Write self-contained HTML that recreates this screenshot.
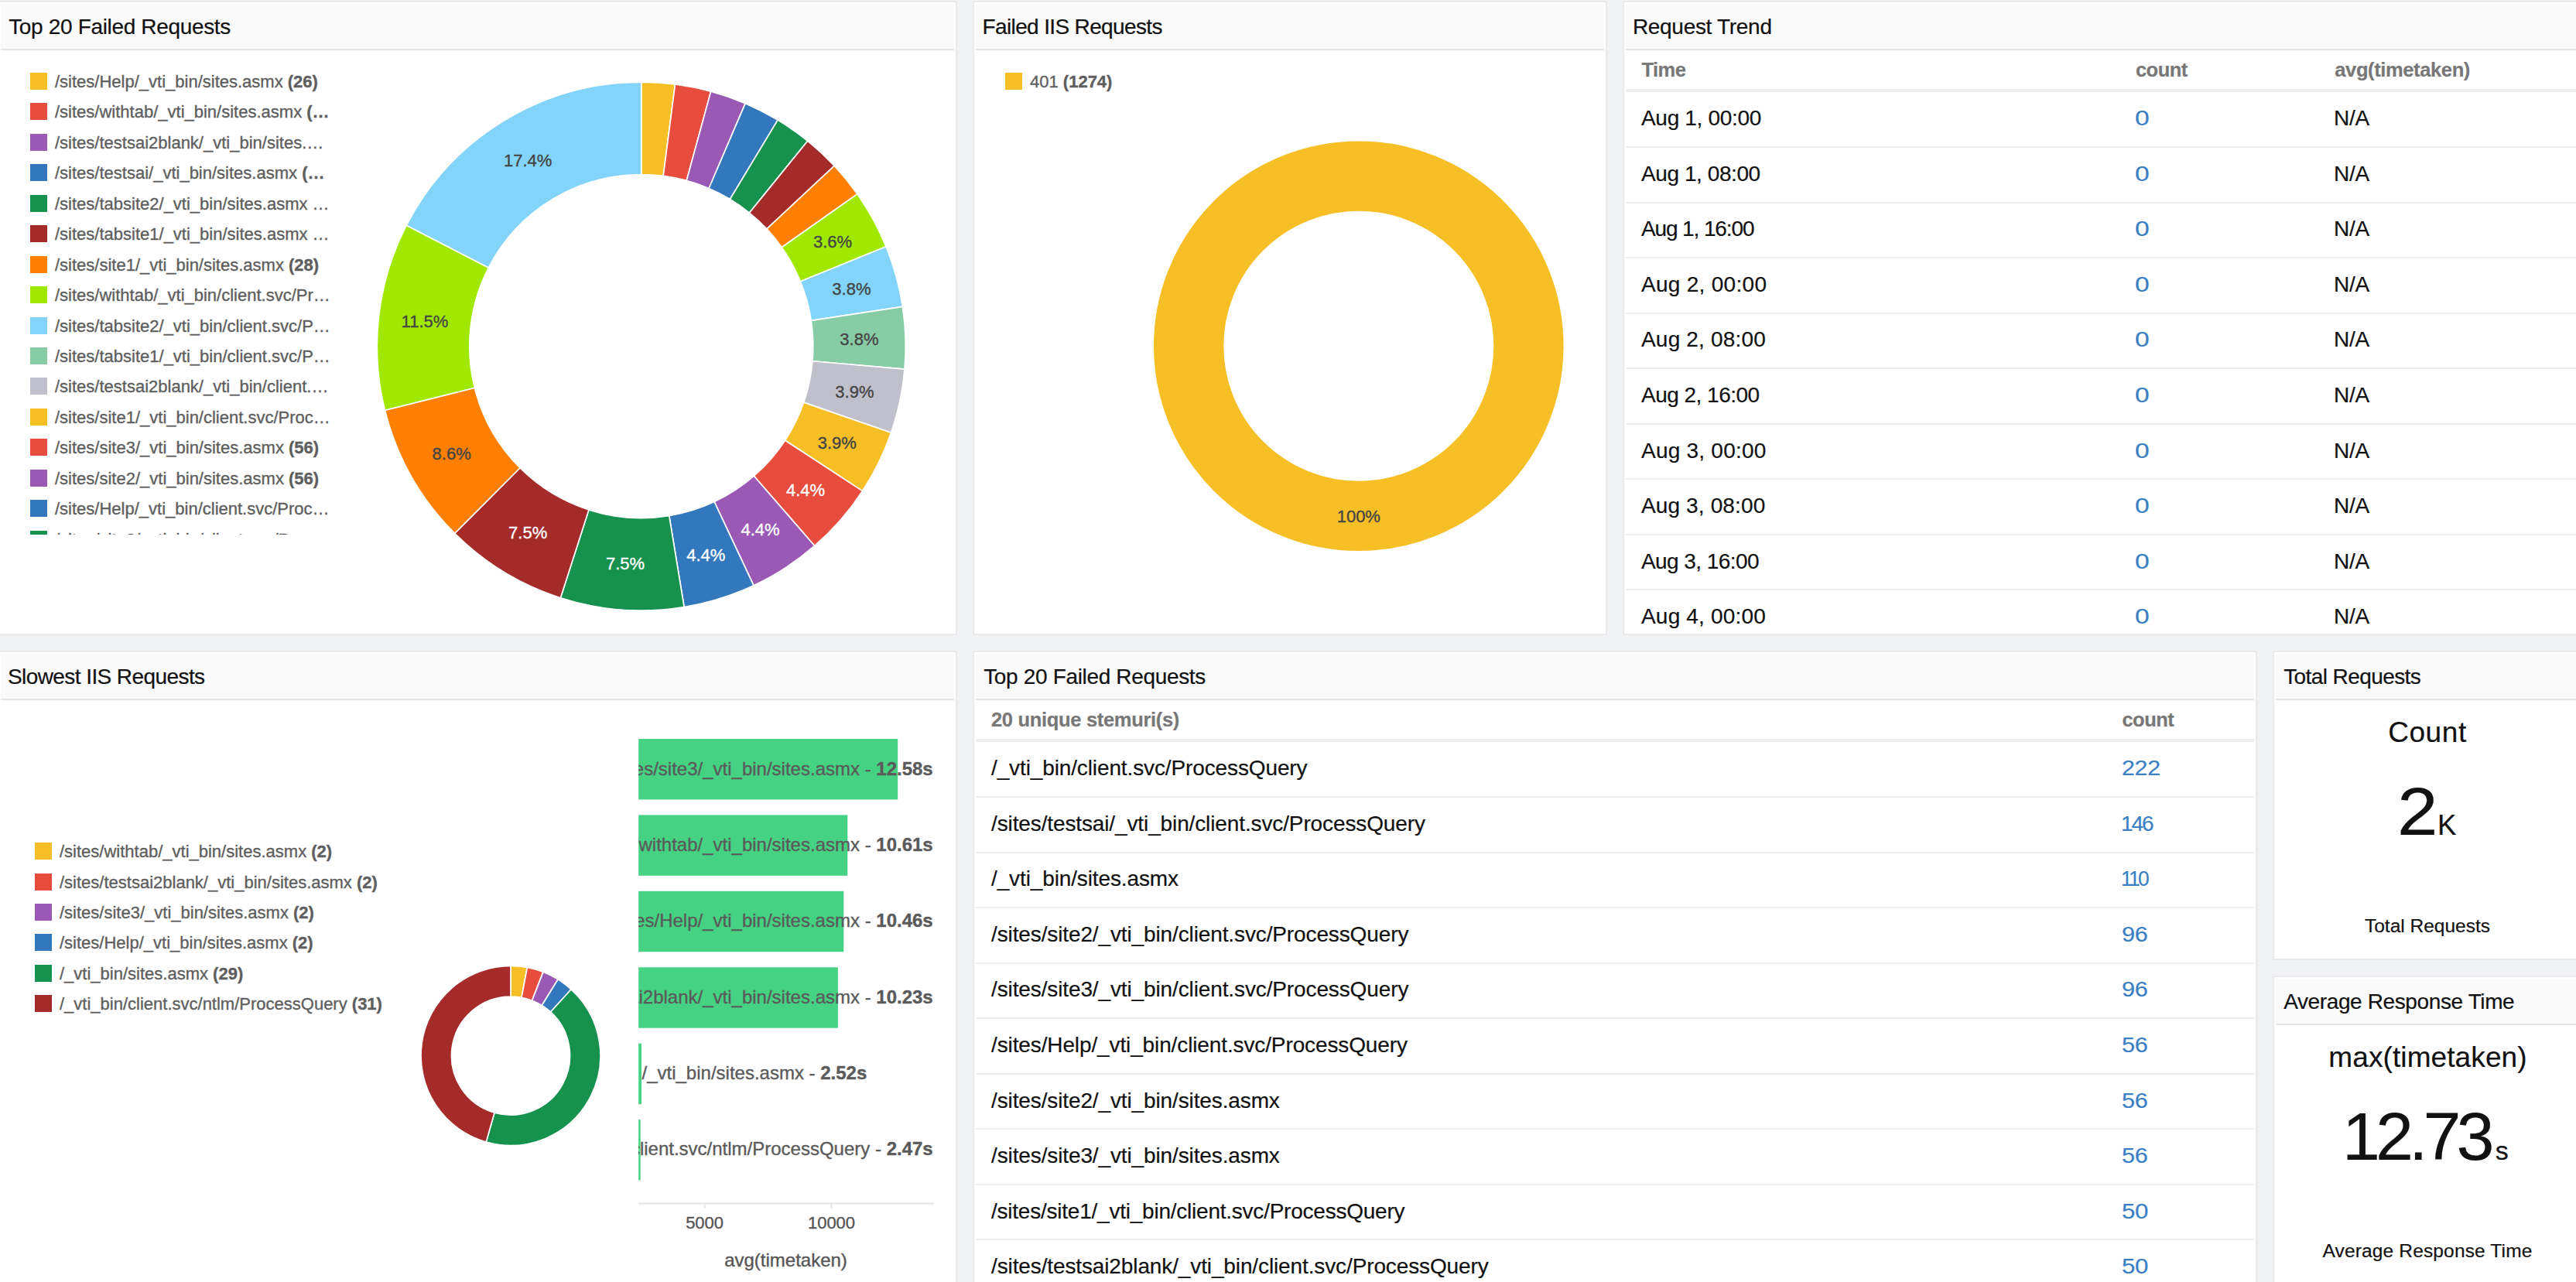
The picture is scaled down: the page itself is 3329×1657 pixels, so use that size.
<!DOCTYPE html>
<html><head><meta charset="utf-8"><title>IIS Dashboard</title>
<style>
html,body{margin:0;padding:0}
body{width:3329px;height:1657px;background:#f1f2f4;overflow:hidden;font-family:"Liberation Sans",sans-serif}
#page{position:relative;width:3329px;height:1657px;overflow:hidden;background:#f1f2f4}
.t{position:absolute;white-space:pre;line-height:1;-webkit-text-stroke:0.2px}
.c{-webkit-text-stroke:0.35px}
.panel{position:absolute;background:#fff;border:2px solid #e9e9eb;overflow:hidden}
.hdr{position:absolute;left:2px;top:2px;height:58px;background:#fafafa;border-bottom:2px solid #e4e4e4}
.sw{position:absolute;width:22px;height:22px}
.ln{position:absolute;height:2px;background:#ededed}
.thl{position:absolute;height:4px;background:#eeeeee}
.clip{position:absolute;overflow:hidden}
svg{position:absolute;left:0;top:0}
b{font-weight:700}
</style></head><body><div id="page">
<div class="panel" style="left:-3px;top:1px;width:1236px;height:816px">
<div class="hdr" style="width:1232px"></div>
</div>
<div class="t " style="top:21px;font-size:28px;color:#111;letter-spacing:-0.34px;left:11.20px;">Top 20 Failed Requests</div>
<div class="panel" style="left:1257px;top:1px;width:816px;height:816px">
<div class="hdr" style="width:812px"></div>
</div>
<div class="t " style="top:21px;font-size:28px;color:#111;letter-spacing:-0.64px;left:1269.60px;">Failed IIS Requests</div>
<div class="panel" style="left:2097px;top:1px;width:1236px;height:816px">
<div class="hdr" style="width:1232px"></div>
</div>
<div class="t " style="top:21px;font-size:28px;color:#111;letter-spacing:-0.3px;left:2109.90px;">Request Trend</div>
<div class="panel" style="left:-3px;top:841px;width:1236px;height:896px">
<div class="hdr" style="width:1232px"></div>
</div>
<div class="t " style="top:861px;font-size:28px;color:#111;letter-spacing:-0.58px;left:10.00px;">Slowest IIS Requests</div>
<div class="panel" style="left:1257px;top:841px;width:1656px;height:896px">
<div class="hdr" style="width:1652px"></div>
</div>
<div class="t " style="top:861px;font-size:28px;color:#111;letter-spacing:-0.34px;left:1271.20px;">Top 20 Failed Requests</div>
<div class="panel" style="left:2937px;top:841px;width:397px;height:396px">
<div class="hdr" style="width:393px"></div>
</div>
<div class="t " style="top:861px;font-size:28px;color:#111;letter-spacing:-0.59px;left:2951.20px;">Total Requests</div>
<div class="panel" style="left:2937px;top:1261px;width:397px;height:496px">
<div class="hdr" style="width:393px"></div>
</div>
<div class="t " style="top:1281px;font-size:28px;color:#111;letter-spacing:-0.38px;left:2951.20px;">Average Response Time</div>
<div class="clip" style="left:0;top:66px;width:480px;height:625px">
<div class="sw" style="left:39px;top:28.0px;background:#F6BF26"></div>
<div class="t c" style="top:29px;font-size:22px;color:#5e5e5e;left:71.00px;">/sites/Help/_vti_bin/sites.asmx <b>(26)</b></div>
<div class="sw" style="left:39px;top:67.0px;background:#E74C3C"></div>
<div class="t c" style="top:68px;font-size:22px;color:#5e5e5e;left:71.00px;">/sites/withtab/_vti_bin/sites.asmx <b>(…</b></div>
<div class="sw" style="left:39px;top:107.0px;background:#9B59B6"></div>
<div class="t c" style="top:108px;font-size:22px;color:#5e5e5e;left:71.00px;">/sites/testsai2blank/_vti_bin/sites.…</div>
<div class="sw" style="left:39px;top:146.0px;background:#3377BC"></div>
<div class="t c" style="top:147px;font-size:22px;color:#5e5e5e;left:71.00px;">/sites/testsai/_vti_bin/sites.asmx <b>(…</b></div>
<div class="sw" style="left:39px;top:186.0px;background:#16914E"></div>
<div class="t c" style="top:187px;font-size:22px;color:#5e5e5e;left:71.00px;">/sites/tabsite2/_vti_bin/sites.asmx …</div>
<div class="sw" style="left:39px;top:225.0px;background:#A52A2A"></div>
<div class="t c" style="top:226px;font-size:22px;color:#5e5e5e;left:71.00px;">/sites/tabsite1/_vti_bin/sites.asmx …</div>
<div class="sw" style="left:39px;top:265.0px;background:#FF7F00"></div>
<div class="t c" style="top:266px;font-size:22px;color:#5e5e5e;left:71.00px;">/sites/site1/_vti_bin/sites.asmx <b>(28)</b></div>
<div class="sw" style="left:39px;top:304.0px;background:#A0E800"></div>
<div class="t c" style="top:305px;font-size:22px;color:#5e5e5e;left:71.00px;">/sites/withtab/_vti_bin/client.svc/Pr…</div>
<div class="sw" style="left:39px;top:344.0px;background:#82D4FA"></div>
<div class="t c" style="top:345px;font-size:22px;color:#5e5e5e;left:71.00px;">/sites/tabsite2/_vti_bin/client.svc/P…</div>
<div class="sw" style="left:39px;top:383.0px;background:#88CCA5"></div>
<div class="t c" style="top:384px;font-size:22px;color:#5e5e5e;left:71.00px;">/sites/tabsite1/_vti_bin/client.svc/P…</div>
<div class="sw" style="left:39px;top:422.0px;background:#C0C0CC"></div>
<div class="t c" style="top:423px;font-size:22px;color:#5e5e5e;left:71.00px;">/sites/testsai2blank/_vti_bin/client.…</div>
<div class="sw" style="left:39px;top:462.0px;background:#F6BF26"></div>
<div class="t c" style="top:463px;font-size:22px;color:#5e5e5e;left:71.00px;">/sites/site1/_vti_bin/client.svc/Proc…</div>
<div class="sw" style="left:39px;top:501.0px;background:#E74C3C"></div>
<div class="t c" style="top:502px;font-size:22px;color:#5e5e5e;left:71.00px;">/sites/site3/_vti_bin/sites.asmx <b>(56)</b></div>
<div class="sw" style="left:39px;top:541.0px;background:#9B59B6"></div>
<div class="t c" style="top:542px;font-size:22px;color:#5e5e5e;left:71.00px;">/sites/site2/_vti_bin/sites.asmx <b>(56)</b></div>
<div class="sw" style="left:39px;top:580.0px;background:#3377BC"></div>
<div class="t c" style="top:581px;font-size:22px;color:#5e5e5e;left:71.00px;">/sites/Help/_vti_bin/client.svc/Proc…</div>
<div class="sw" style="left:39px;top:620.0px;background:#16914E"></div>
<div class="t c" style="top:621px;font-size:22px;color:#5e5e5e;left:71.00px;">/sites/site3/_vti_bin/client.svc/Pro…</div>
</div>
<div class="sw" style="left:1299px;top:94px;background:#F6BF26"></div>
<div class="t c" style="top:95px;font-size:22px;color:#5e5e5e;left:1331.00px;">401 <b>(1274)</b></div>
<div class="sw" style="left:45px;top:1089.0px;background:#F6BF26"></div>
<div class="t c" style="top:1090px;font-size:22px;color:#5e5e5e;left:77.00px;">/sites/withtab/_vti_bin/sites.asmx <b>(2)</b></div>
<div class="sw" style="left:45px;top:1129.0px;background:#E74C3C"></div>
<div class="t c" style="top:1130px;font-size:22px;color:#5e5e5e;left:77.00px;">/sites/testsai2blank/_vti_bin/sites.asmx <b>(2)</b></div>
<div class="sw" style="left:45px;top:1168.0px;background:#9B59B6"></div>
<div class="t c" style="top:1169px;font-size:22px;color:#5e5e5e;left:77.00px;">/sites/site3/_vti_bin/sites.asmx <b>(2)</b></div>
<div class="sw" style="left:45px;top:1207.0px;background:#3377BC"></div>
<div class="t c" style="top:1208px;font-size:22px;color:#5e5e5e;left:77.00px;">/sites/Help/_vti_bin/sites.asmx <b>(2)</b></div>
<div class="sw" style="left:45px;top:1247.0px;background:#16914E"></div>
<div class="t c" style="top:1248px;font-size:22px;color:#5e5e5e;left:77.00px;">/_vti_bin/sites.asmx <b>(29)</b></div>
<div class="sw" style="left:45px;top:1286.0px;background:#A52A2A"></div>
<div class="t c" style="top:1287px;font-size:22px;color:#5e5e5e;left:77.00px;">/_vti_bin/client.svc/ntlm/ProcessQuery <b>(31)</b></div>
<svg width="3329" height="1657" viewBox="0 0 3329 1657">
<path d="M828.80 106.10A341.5 341.5 0 0 1 872.47 108.90L857.19 227.42A222.0 222.0 0 0 0 828.80 225.60Z" fill="#F6BF26" stroke="#fff" stroke-width="1.7" stroke-linejoin="round"/><path d="M872.47 108.90A341.5 341.5 0 0 1 918.68 118.14L887.23 233.43A222.0 222.0 0 0 0 857.19 227.42Z" fill="#E74C3C" stroke="#fff" stroke-width="1.7" stroke-linejoin="round"/><path d="M918.68 118.14A341.5 341.5 0 0 1 963.17 133.65L916.15 243.51A222.0 222.0 0 0 0 887.23 233.43Z" fill="#9B59B6" stroke="#fff" stroke-width="1.7" stroke-linejoin="round"/><path d="M963.17 133.65A341.5 341.5 0 0 1 1005.11 155.13L943.41 257.48A222.0 222.0 0 0 0 916.15 243.51Z" fill="#3377BC" stroke="#fff" stroke-width="1.7" stroke-linejoin="round"/><path d="M1005.11 155.13A341.5 341.5 0 0 1 1043.69 182.19L968.49 275.06A222.0 222.0 0 0 0 943.41 257.48Z" fill="#16914E" stroke="#fff" stroke-width="1.7" stroke-linejoin="round"/><path d="M1043.69 182.19A341.5 341.5 0 0 1 1078.18 214.29L990.92 295.93A222.0 222.0 0 0 0 968.49 275.06Z" fill="#A52A2A" stroke="#fff" stroke-width="1.7" stroke-linejoin="round"/><path d="M1078.18 214.29A341.5 341.5 0 0 1 1107.92 250.84L1010.25 319.69A222.0 222.0 0 0 0 990.92 295.93Z" fill="#FF7F00" stroke="#fff" stroke-width="1.7" stroke-linejoin="round"/><path d="M1107.92 250.84A341.5 341.5 0 0 1 1145.03 318.67L1034.37 363.78A222.0 222.0 0 0 0 1010.25 319.69Z" fill="#A0E800" stroke="#fff" stroke-width="1.7" stroke-linejoin="round"/><path d="M1145.03 318.67A341.5 341.5 0 0 1 1166.44 396.42L1048.29 414.33A222.0 222.0 0 0 0 1034.37 363.78Z" fill="#82D4FA" stroke="#fff" stroke-width="1.7" stroke-linejoin="round"/><path d="M1166.44 396.42A341.5 341.5 0 0 1 1169.03 477.04L1049.97 466.74A222.0 222.0 0 0 0 1048.29 414.33Z" fill="#88CCA5" stroke="#fff" stroke-width="1.7" stroke-linejoin="round"/><path d="M1169.03 477.04A341.5 341.5 0 0 1 1151.55 559.20L1038.61 520.15A222.0 222.0 0 0 0 1049.97 466.74Z" fill="#C0C0CC" stroke="#fff" stroke-width="1.7" stroke-linejoin="round"/><path d="M1151.55 559.20A341.5 341.5 0 0 1 1114.55 634.61L1014.56 569.17A222.0 222.0 0 0 0 1038.61 520.15Z" fill="#F6BF26" stroke="#fff" stroke-width="1.7" stroke-linejoin="round"/><path d="M1114.55 634.61A341.5 341.5 0 0 1 1052.72 705.44L974.37 615.21A222.0 222.0 0 0 0 1014.56 569.17Z" fill="#E74C3C" stroke="#fff" stroke-width="1.7" stroke-linejoin="round"/><path d="M1052.72 705.44A341.5 341.5 0 0 1 973.93 756.73L923.14 648.56A222.0 222.0 0 0 0 974.37 615.21Z" fill="#9B59B6" stroke="#fff" stroke-width="1.7" stroke-linejoin="round"/><path d="M973.93 756.73A341.5 341.5 0 0 1 884.13 784.59L864.77 666.67A222.0 222.0 0 0 0 923.14 648.56Z" fill="#3377BC" stroke="#fff" stroke-width="1.7" stroke-linejoin="round"/><path d="M884.13 784.59A341.5 341.5 0 0 1 724.39 772.75L760.93 658.97A222.0 222.0 0 0 0 864.77 666.67Z" fill="#16914E" stroke="#fff" stroke-width="1.7" stroke-linejoin="round"/><path d="M724.39 772.75A341.5 341.5 0 0 1 587.62 689.37L672.02 604.77A222.0 222.0 0 0 0 760.93 658.97Z" fill="#A52A2A" stroke="#fff" stroke-width="1.7" stroke-linejoin="round"/><path d="M587.62 689.37A341.5 341.5 0 0 1 497.43 530.14L613.38 501.26A222.0 222.0 0 0 0 672.02 604.77Z" fill="#FF7F00" stroke="#fff" stroke-width="1.7" stroke-linejoin="round"/><path d="M497.43 530.14A341.5 341.5 0 0 1 525.25 291.14L631.47 345.89A222.0 222.0 0 0 0 613.38 501.26Z" fill="#A0E800" stroke="#fff" stroke-width="1.7" stroke-linejoin="round"/><path d="M525.25 291.14A341.5 341.5 0 0 1 828.80 106.10L828.80 225.60A222.0 222.0 0 0 0 631.47 345.89Z" fill="#82D4FA" stroke="#fff" stroke-width="1.7" stroke-linejoin="round"/>
<circle cx="1755.8" cy="447.2" r="219.65" fill="none" stroke="#F6BF26" stroke-width="90.30000000000001"/>
<path d="M660.00 1248.50A116.0 116.0 0 0 1 681.31 1250.48L674.06 1289.30A76.5 76.5 0 0 0 660.00 1288.00Z" fill="#F6BF26" stroke="#fff" stroke-width="1.7" stroke-linejoin="round"/><path d="M681.31 1250.48A116.0 116.0 0 0 1 701.90 1256.33L687.63 1293.17A76.5 76.5 0 0 0 674.06 1289.30Z" fill="#E74C3C" stroke="#fff" stroke-width="1.7" stroke-linejoin="round"/><path d="M701.90 1256.33A116.0 116.0 0 0 1 721.07 1265.87L700.27 1299.46A76.5 76.5 0 0 0 687.63 1293.17Z" fill="#9B59B6" stroke="#fff" stroke-width="1.7" stroke-linejoin="round"/><path d="M721.07 1265.87A116.0 116.0 0 0 1 738.15 1278.77L711.54 1307.97A76.5 76.5 0 0 0 700.27 1299.46Z" fill="#3377BC" stroke="#fff" stroke-width="1.7" stroke-linejoin="round"/><path d="M738.15 1278.77A116.0 116.0 0 0 1 628.26 1476.07L639.06 1438.08A76.5 76.5 0 0 0 711.54 1307.97Z" fill="#16914E" stroke="#fff" stroke-width="1.7" stroke-linejoin="round"/><path d="M628.26 1476.07A116.0 116.0 0 0 1 660.00 1248.50L660.00 1288.00A76.5 76.5 0 0 0 639.06 1438.08Z" fill="#A52A2A" stroke="#fff" stroke-width="1.7" stroke-linejoin="round"/>
<rect x="825.2" y="955.0" width="335.0" height="78.4" fill="#45D282"/>
<rect x="825.2" y="1053.4" width="270.1" height="78.4" fill="#45D282"/>
<rect x="825.2" y="1151.8" width="265.1" height="78.4" fill="#45D282"/>
<rect x="825.2" y="1250.3" width="257.7" height="78.4" fill="#45D282"/>
<rect x="825.2" y="1348.7" width="3.8" height="78.4" fill="#45D282"/>
<rect x="825.2" y="1447.1" width="2.5" height="78.4" fill="#45D282"/>
<rect x="825" y="1554.5" width="382" height="2" fill="#e6e6e6"/>
<rect x="909.6" y="1556" width="2" height="6" fill="#e6e6e6"/>
<rect x="1073.5" y="1556" width="2" height="6" fill="#e6e6e6"/>
</svg>
<div class="t c" style="top:302px;font-size:22px;color:#444;left:75.98px;width:2000px;text-align:center;">3.6%</div>
<div class="t c" style="top:363px;font-size:22px;color:#444;left:100.43px;width:2000px;text-align:center;">3.8%</div>
<div class="t c" style="top:428px;font-size:22px;color:#444;left:110.41px;width:2000px;text-align:center;">3.8%</div>
<div class="t c" style="top:496px;font-size:22px;color:#444;left:104.38px;width:2000px;text-align:center;">3.9%</div>
<div class="t c" style="top:562px;font-size:22px;color:#444;left:81.74px;width:2000px;text-align:center;">3.9%</div>
<div class="t c" style="top:623px;font-size:22px;color:#fff;left:41.07px;width:2000px;text-align:center;">4.4%</div>
<div class="t c" style="top:674px;font-size:22px;color:#fff;left:-17.50px;width:2000px;text-align:center;">4.4%</div>
<div class="t c" style="top:707px;font-size:22px;color:#fff;left:-87.71px;width:2000px;text-align:center;">4.4%</div>
<div class="t c" style="top:718px;font-size:22px;color:#fff;left:-192.02px;width:2000px;text-align:center;">7.5%</div>
<div class="t c" style="top:678px;font-size:22px;color:#fff;left:-317.85px;width:2000px;text-align:center;">7.5%</div>
<div class="t c" style="top:576px;font-size:22px;color:#444;left:-416.35px;width:2000px;text-align:center;">8.6%</div>
<div class="t c" style="top:405px;font-size:22px;color:#444;left:-451.06px;width:2000px;text-align:center;">11.5%</div>
<div class="t c" style="top:197px;font-size:22px;color:#444;left:-317.85px;width:2000px;text-align:center;">17.4%</div>
<div class="t c" style="top:657px;font-size:22px;color:#444;left:755.80px;width:2000px;text-align:center;">100%</div>
<div class="clip" style="left:825px;top:940px;width:400px;height:600px">
<div class="t c" style="top:42px;font-size:24px;color:#5a5a5a;left:-1619.30px;width:2000px;text-align:right;">/sites/site3/_vti_bin/sites.asmx - <b>12.58s</b></div>
<div class="t c" style="top:140px;font-size:24px;color:#5a5a5a;left:-1619.30px;width:2000px;text-align:right;">/sites/withtab/_vti_bin/sites.asmx - <b>10.61s</b></div>
<div class="t c" style="top:238px;font-size:24px;color:#5a5a5a;left:-1619.30px;width:2000px;text-align:right;">/sites/Help/_vti_bin/sites.asmx - <b>10.46s</b></div>
<div class="t c" style="top:337px;font-size:24px;color:#5a5a5a;left:-1619.30px;width:2000px;text-align:right;">/sites/testsai2blank/_vti_bin/sites.asmx - <b>10.23s</b></div>
<div class="t c" style="top:435px;font-size:24px;color:#5a5a5a;left:4.50px;">/_vti_bin/sites.asmx - <b>2.52s</b></div>
<div class="t c" style="top:533px;font-size:24px;color:#5a5a5a;left:-1619.30px;width:2000px;text-align:right;">/_vti_bin/client.svc/ntlm/ProcessQuery - <b>2.47s</b></div>
</div>
<div class="t c" style="top:1570px;font-size:22px;color:#555;left:-89.40px;width:2000px;text-align:center;">5000</div>
<div class="t c" style="top:1570px;font-size:22px;color:#555;left:74.50px;width:2000px;text-align:center;">10000</div>
<div class="t c" style="top:1617px;font-size:24px;color:#555;left:15.50px;width:2000px;text-align:center;">avg(timetaken)</div>
<div class="t " style="top:78px;font-size:25.5px;color:#777;font-weight:700;letter-spacing:-0.5px;left:2121.40px;">Time</div>
<div class="t " style="top:78px;font-size:25.5px;color:#777;font-weight:700;letter-spacing:-0.56px;left:2760.00px;">count</div>
<div class="t " style="top:78px;font-size:25.5px;color:#777;font-weight:700;letter-spacing:-0.38px;left:3017.30px;">avg(timetaken)</div>
<div class="thl" style="left:2101px;top:115px;width:1300px"></div>
<div class="clip" style="left:2099px;top:119px;width:1300px;height:700px">
<div class="t " style="top:20px;font-size:28px;color:#111;letter-spacing:-0.31px;left:22.00px;">Aug 1, 00:00</div>
<div class="t " style="top:20px;font-size:28px;color:#3b7fc4;left:659.60px;transform-origin:0 0;transform:scaleX(1.2);">0</div>
<div class="t " style="top:20px;font-size:28px;color:#111;letter-spacing:-0.3px;left:917.00px;">N/A</div>
<div class="ln" style="left:2px;top:70px;width:1300px"></div>
<div class="t " style="top:92px;font-size:28px;color:#111;letter-spacing:-0.42px;left:22.00px;">Aug 1, 08:00</div>
<div class="t " style="top:92px;font-size:28px;color:#3b7fc4;left:659.60px;transform-origin:0 0;transform:scaleX(1.2);">0</div>
<div class="t " style="top:92px;font-size:28px;color:#111;letter-spacing:-0.3px;left:917.00px;">N/A</div>
<div class="ln" style="left:2px;top:142px;width:1300px"></div>
<div class="t " style="top:163px;font-size:28px;color:#111;letter-spacing:-1.12px;left:22.00px;">Aug 1, 16:00</div>
<div class="t " style="top:163px;font-size:28px;color:#3b7fc4;left:659.60px;transform-origin:0 0;transform:scaleX(1.2);">0</div>
<div class="t " style="top:163px;font-size:28px;color:#111;letter-spacing:-0.3px;left:917.00px;">N/A</div>
<div class="ln" style="left:2px;top:213px;width:1300px"></div>
<div class="t " style="top:235px;font-size:28px;color:#111;letter-spacing:0.29px;left:22.00px;">Aug 2, 00:00</div>
<div class="t " style="top:235px;font-size:28px;color:#3b7fc4;left:659.60px;transform-origin:0 0;transform:scaleX(1.2);">0</div>
<div class="t " style="top:235px;font-size:28px;color:#111;letter-spacing:-0.3px;left:917.00px;">N/A</div>
<div class="ln" style="left:2px;top:285px;width:1300px"></div>
<div class="t " style="top:306px;font-size:28px;color:#111;letter-spacing:0.19px;left:22.00px;">Aug 2, 08:00</div>
<div class="t " style="top:306px;font-size:28px;color:#3b7fc4;left:659.60px;transform-origin:0 0;transform:scaleX(1.2);">0</div>
<div class="t " style="top:306px;font-size:28px;color:#111;letter-spacing:-0.3px;left:917.00px;">N/A</div>
<div class="ln" style="left:2px;top:356px;width:1300px"></div>
<div class="t " style="top:378px;font-size:28px;color:#111;letter-spacing:-0.52px;left:22.00px;">Aug 2, 16:00</div>
<div class="t " style="top:378px;font-size:28px;color:#3b7fc4;left:659.60px;transform-origin:0 0;transform:scaleX(1.2);">0</div>
<div class="t " style="top:378px;font-size:28px;color:#111;letter-spacing:-0.3px;left:917.00px;">N/A</div>
<div class="ln" style="left:2px;top:428px;width:1300px"></div>
<div class="t " style="top:450px;font-size:28px;color:#111;letter-spacing:0.23px;left:22.00px;">Aug 3, 00:00</div>
<div class="t " style="top:450px;font-size:28px;color:#3b7fc4;left:659.60px;transform-origin:0 0;transform:scaleX(1.2);">0</div>
<div class="t " style="top:450px;font-size:28px;color:#111;letter-spacing:-0.3px;left:917.00px;">N/A</div>
<div class="ln" style="left:2px;top:499px;width:1300px"></div>
<div class="t " style="top:521px;font-size:28px;color:#111;letter-spacing:0.13px;left:22.00px;">Aug 3, 08:00</div>
<div class="t " style="top:521px;font-size:28px;color:#3b7fc4;left:659.60px;transform-origin:0 0;transform:scaleX(1.2);">0</div>
<div class="t " style="top:521px;font-size:28px;color:#111;letter-spacing:-0.3px;left:917.00px;">N/A</div>
<div class="ln" style="left:2px;top:571px;width:1300px"></div>
<div class="t " style="top:593px;font-size:28px;color:#111;letter-spacing:-0.57px;left:22.00px;">Aug 3, 16:00</div>
<div class="t " style="top:593px;font-size:28px;color:#3b7fc4;left:659.60px;transform-origin:0 0;transform:scaleX(1.2);">0</div>
<div class="t " style="top:593px;font-size:28px;color:#111;letter-spacing:-0.3px;left:917.00px;">N/A</div>
<div class="ln" style="left:2px;top:642px;width:1300px"></div>
<div class="t " style="top:664px;font-size:28px;color:#111;letter-spacing:0.19px;left:22.00px;">Aug 4, 00:00</div>
<div class="t " style="top:664px;font-size:28px;color:#3b7fc4;left:659.60px;transform-origin:0 0;transform:scaleX(1.2);">0</div>
<div class="t " style="top:664px;font-size:28px;color:#111;letter-spacing:-0.3px;left:917.00px;">N/A</div>
<div class="ln" style="left:2px;top:714px;width:1300px"></div>
</div>
<div class="t " style="top:918px;font-size:25.5px;color:#777;font-weight:700;letter-spacing:-0.32px;left:1281.00px;">20 unique stemuri(s)</div>
<div class="t " style="top:918px;font-size:25.5px;color:#777;font-weight:700;letter-spacing:-0.56px;left:2742.50px;">count</div>
<div class="thl" style="left:1261px;top:955px;width:1652px"></div>
<div class="t " style="top:979px;font-size:28px;color:#111;letter-spacing:-0.12px;left:1281.00px;">/_vti_bin/client.svc/ProcessQuery</div>
<div class="t " style="top:979px;font-size:28px;color:#3b7fc4;letter-spacing:-0.3px;left:2742.00px;transform-origin:0 0;transform:scaleX(1.086);">222</div>
<div class="ln" style="left:1261px;top:1029px;width:1652px"></div>
<div class="t " style="top:1051px;font-size:28px;color:#111;letter-spacing:-0.12px;left:1281.00px;">/sites/testsai/_vti_bin/client.svc/ProcessQuery</div>
<div class="t " style="top:1051px;font-size:28px;color:#3b7fc4;letter-spacing:-2.05px;left:2741.00px;transform-origin:0 0;transform:scaleX(1);">146</div>
<div class="ln" style="left:1261px;top:1101px;width:1652px"></div>
<div class="t " style="top:1122px;font-size:28px;color:#111;letter-spacing:-0.12px;left:1281.00px;">/_vti_bin/sites.asmx</div>
<div class="t " style="top:1122px;font-size:28px;color:#3b7fc4;letter-spacing:-2.8px;left:2741.00px;transform-origin:0 0;transform:scaleX(0.94);">110</div>
<div class="ln" style="left:1261px;top:1172px;width:1652px"></div>
<div class="t " style="top:1194px;font-size:28px;color:#111;letter-spacing:-0.12px;left:1281.00px;">/sites/site2/_vti_bin/client.svc/ProcessQuery</div>
<div class="t " style="top:1194px;font-size:28px;color:#3b7fc4;letter-spacing:-0.3px;left:2742.00px;transform-origin:0 0;transform:scaleX(1.097);">96</div>
<div class="ln" style="left:1261px;top:1244px;width:1652px"></div>
<div class="t " style="top:1265px;font-size:28px;color:#111;letter-spacing:-0.12px;left:1281.00px;">/sites/site3/_vti_bin/client.svc/ProcessQuery</div>
<div class="t " style="top:1265px;font-size:28px;color:#3b7fc4;letter-spacing:-0.3px;left:2742.00px;transform-origin:0 0;transform:scaleX(1.097);">96</div>
<div class="ln" style="left:1261px;top:1315px;width:1652px"></div>
<div class="t " style="top:1337px;font-size:28px;color:#111;letter-spacing:-0.12px;left:1281.00px;">/sites/Help/_vti_bin/client.svc/ProcessQuery</div>
<div class="t " style="top:1337px;font-size:28px;color:#3b7fc4;letter-spacing:-0.3px;left:2742.00px;transform-origin:0 0;transform:scaleX(1.097);">56</div>
<div class="ln" style="left:1261px;top:1387px;width:1652px"></div>
<div class="t " style="top:1409px;font-size:28px;color:#111;letter-spacing:-0.12px;left:1281.00px;">/sites/site2/_vti_bin/sites.asmx</div>
<div class="t " style="top:1409px;font-size:28px;color:#3b7fc4;letter-spacing:-0.3px;left:2742.00px;transform-origin:0 0;transform:scaleX(1.097);">56</div>
<div class="ln" style="left:1261px;top:1458px;width:1652px"></div>
<div class="t " style="top:1480px;font-size:28px;color:#111;letter-spacing:-0.12px;left:1281.00px;">/sites/site3/_vti_bin/sites.asmx</div>
<div class="t " style="top:1480px;font-size:28px;color:#3b7fc4;letter-spacing:-0.3px;left:2742.00px;transform-origin:0 0;transform:scaleX(1.097);">56</div>
<div class="ln" style="left:1261px;top:1530px;width:1652px"></div>
<div class="t " style="top:1552px;font-size:28px;color:#111;letter-spacing:-0.23px;left:1281.00px;">/sites/site1/_vti_bin/client.svc/ProcessQuery</div>
<div class="t " style="top:1552px;font-size:28px;color:#3b7fc4;letter-spacing:-0.3px;left:2742.00px;transform-origin:0 0;transform:scaleX(1.117);">50</div>
<div class="ln" style="left:1261px;top:1601px;width:1652px"></div>
<div class="t " style="top:1623px;font-size:28px;color:#111;letter-spacing:-0.12px;left:1281.00px;">/sites/testsai2blank/_vti_bin/client.svc/ProcessQuery</div>
<div class="t " style="top:1623px;font-size:28px;color:#3b7fc4;letter-spacing:-0.3px;left:2742.00px;transform-origin:0 0;transform:scaleX(1.117);">50</div>
<div class="ln" style="left:1261px;top:1673px;width:1652px"></div>
<div class="t " style="top:928px;font-size:37px;color:#111;letter-spacing:0.6px;left:2137.00px;width:2000px;text-align:center;">Count</div>
<div class="t " style="top:1185px;font-size:24.5px;color:#111;left:2137.00px;width:2000px;text-align:center;">Total Requests</div>
<div class="t " style="top:1005px;font-size:87px;color:#111;left:3097.80px;transform:scaleX(1.085);transform-origin:0 0;">2</div>
<div class="t " style="top:1049px;font-size:36.5px;color:#111;left:3150.00px;">K</div>
<div class="t " style="top:1348px;font-size:37px;color:#111;letter-spacing:0.1px;left:2137.50px;width:2000px;text-align:center;">max(timetaken)</div>
<div class="t " style="top:1425px;font-size:88px;color:#111;letter-spacing:-5.95px;left:3027.00px;">12.73</div>
<div class="t " style="top:1470px;font-size:34px;color:#111;left:3224.80px;">s</div>
<div class="t " style="top:1605px;font-size:24.5px;color:#111;letter-spacing:0.15px;left:2137.00px;width:2000px;text-align:center;">Average Response Time</div>
</div></body></html>
